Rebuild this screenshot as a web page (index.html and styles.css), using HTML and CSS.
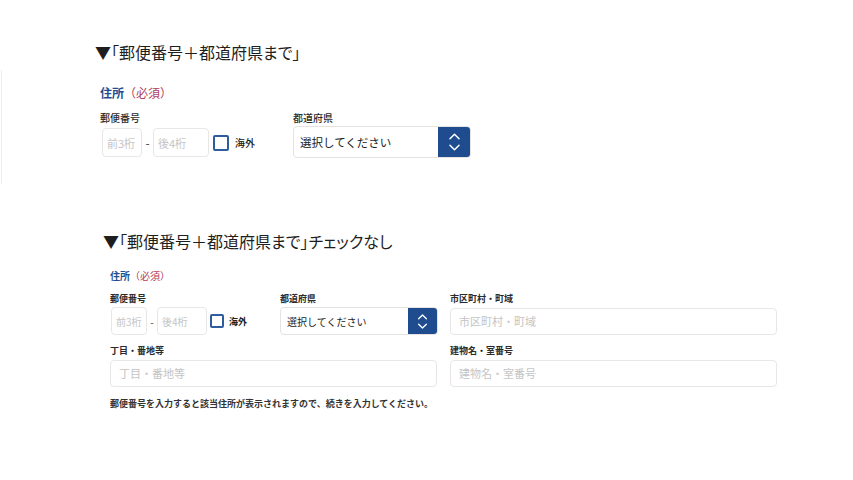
FILE: index.html
```html
<!DOCTYPE html>
<html lang="ja">

<head>
    <meta charset="utf-8">
    <title>住所入力フォーム</title>
    <link rel="stylesheet" href="styles.css">
</head>

<body>
    <div class="demo demo-one">
        <h2 class="demo-title">▼「郵便番号＋都道府県まで」</h2>
        <div class="panel">
            <div class="group-title">住所<span class="req">（必須）</span></div>
            <div class="row">
                <div class="field postal">
                    <label>郵便番号</label>
                    <div class="postal-inputs">
                        <input type="text" class="zip zip-a" placeholder="前3桁">
                        <span class="dash">-</span>
                        <input type="text" class="zip zip-b" placeholder="後4桁">
                        <span class="check"></span>
                        <span class="check-label">海外</span>
                    </div>
                </div>
                <div class="field pref">
                    <label>都道府県</label>
                    <div class="select">
                        <span class="select-text">選択してください</span>
                        <span class="select-btn">
                            <svg viewBox="0 0 14 22" width="13" height="20">
                                <path d="M2 7.5 L7 2.5 L12 7.5 M2 14.5 L7 19.5 L12 14.5" fill="none" stroke="#fff" stroke-width="1.6" stroke-linecap="round" stroke-linejoin="round"/>
                            </svg>
                        </span>
                    </div>
                </div>
            </div>
        </div>
    </div>

    <div class="demo demo-two">
        <h2 class="demo-title">▼「郵便番号＋都道府県まで」チェックなし</h2>
        <div class="panel">
            <div class="group-title">住所<span class="req">（必須）</span></div>
            <div class="grid">
                <div class="row">
                    <div class="field postal">
                        <label>郵便番号</label>
                        <div class="postal-inputs">
                            <input type="text" class="zip zip-a" placeholder="前3桁">
                            <span class="dash">-</span>
                            <input type="text" class="zip zip-b" placeholder="後4桁">
                            <span class="check"></span>
                            <span class="check-label">海外</span>
                        </div>
                    </div>
                    <div class="field pref">
                        <label>都道府県</label>
                        <div class="select">
                            <span class="select-text">選択してください</span>
                            <span class="select-btn">
                                <svg viewBox="0 0 14 22" width="11" height="17">
                                    <path d="M2 7.5 L7 2.5 L12 7.5 M2 14.5 L7 19.5 L12 14.5" fill="none" stroke="#fff" stroke-width="1.7" stroke-linecap="round" stroke-linejoin="round"/>
                                </svg>
                            </span>
                        </div>
                    </div>
                </div>
                <div class="field">
                    <label>市区町村・町域</label>
                    <input type="text" class="wide" placeholder="市区町村・町域">
                </div>
                <div class="field">
                    <label>丁目・番地等</label>
                    <input type="text" class="wide" placeholder="丁目・番地等">
                </div>
                <div class="field">
                    <label>建物名・室番号</label>
                    <input type="text" class="wide" placeholder="建物名・室番号">
                </div>
            </div>
            <p class="note">郵便番号を入力すると該当住所が表示されますので、続きを入力してください。</p>
        </div>
    </div>
</body>

</html>
```

FILE: styles.css
```css
body {
    margin: 0;
    background: #fff;
    color: #222;
    font-family: "Noto Sans CJK JP", "Noto Sans", sans-serif;
}

.demo-title {
    margin: 0;
    font-size: 16px;
    font-weight: 400;
    line-height: 20px;
    color: #1e1e1e;
    font-feature-settings: "palt";
}

input {
    font-family: inherit;
    box-sizing: border-box;
    border: 1px solid #ebe6e6;
    border-radius: 4px;
    background: #fff;
    outline: none;
    margin: 0;
}

input::placeholder {
    color: #c4c4c4;
}

label {
    display: block;
    font-weight: 700;
    color: #2a2a2a;
}

.group-title {
    font-weight: 700;
    color: #1f4f8f;
}

.req {
    font-weight: 400;
    color: #b04060;
}

.row {
    display: flex;
    align-items: flex-start;
}

.postal {
    flex-shrink: 0;
}

.postal-inputs {
    display: flex;
    align-items: center;
}

.dash {
    color: #444;
    text-align: center;
}

.check {
    box-sizing: border-box;
    border: 2px solid #2f5c9c;
    border-radius: 2px;
    background: #fff;
}

.check-label {
    white-space: nowrap;
}

.select {
    box-sizing: border-box;
    display: flex;
    align-items: center;
    border: 1px solid #e6e2e2;
    border-radius: 4px;
    overflow: hidden;
}

.select-text {
    flex: 1;
    color: #222;
}

.select-btn {
    align-self: stretch;
    display: flex;
    align-items: center;
    justify-content: center;
    background: #1f4c8f;
}

/* 上のサンプル */
.demo-one {
    padding-top: 42px;
}

.demo-one .demo-title {
    padding-left: 95px;
}

.demo-one .panel {
    margin: 8px 0 0 1px;
    border-left: 1px solid #eeeeee;
    padding: 15px 0 26px 98px;
}

.demo-one .group-title {
    font-size: 12px;
    line-height: 16px;
}

.demo-one label {
    font-size: 10px;
    line-height: 14px;
    margin-top: 10px;
    font-weight: 500;
}

.demo-one .postal {
    width: 193px;
}

.demo-one .postal-inputs {
    margin-top: 3px;
    padding-left: 2px;
}

.demo-one .zip {
    height: 29px;
    font-size: 11px;
    padding: 0 4px;
}

.demo-one .zip-a {
    width: 40px;
}

.demo-one .zip-b {
    width: 56px;
}

.demo-one .dash {
    width: 11px;
    font-size: 12px;
}

.demo-one .check {
    width: 16px;
    height: 16px;
    margin-left: 4px;
}

.demo-one .check-label {
    font-size: 10px;
    margin-left: 6px;
    font-weight: 500;
}

.demo-one .select {
    width: 178px;
    height: 32px;
    margin-top: 1px;
}

.demo-one .select-text {
    font-size: 11.5px;
    padding-left: 6px;
}

.demo-one .select-btn {
    width: 32px;
}

/* 下のサンプル */
.demo-two {
    padding-top: 47px;
}

.demo-two .demo-title {
    padding-left: 103px;
}

.demo-two .panel {
    padding: 18px 0 0 110px;
}

.demo-two .group-title {
    font-size: 10px;
    line-height: 14px;
}

.demo-two .grid {
    display: grid;
    grid-template-columns: 327px 327px;
    column-gap: 13px;
    row-gap: 10px;
}

.demo-two label {
    font-size: 9px;
    line-height: 12px;
    margin-bottom: 2px;
}

.demo-two .grid > .row,
.demo-two .grid > .field:nth-child(2) {
    margin-top: 10px;
}

.demo-two .postal {
    width: 170px;
}

.demo-two .zip {
    height: 28px;
    font-size: 10px;
    padding: 0 4px;
}

.demo-two .zip-a {
    width: 36px;
    margin-left: 1px;
}

.demo-two .zip-b {
    width: 50px;
}

.demo-two .dash {
    width: 10px;
    font-size: 10px;
}

.demo-two .check {
    width: 14px;
    height: 14px;
    margin-left: 3px;
}

.demo-two .check-label {
    font-size: 9px;
    margin-left: 5px;
    font-weight: 700;
}

.demo-two .select {
    width: 158px;
    height: 28px;
}

.demo-two .select-text {
    font-size: 10px;
    padding-left: 6px;
}

.demo-two .select-btn {
    width: 29px;
}

.demo-two .wide {
    width: 100%;
    height: 27px;
    font-size: 11px;
    padding: 0 8px;
}

.demo-two .note {
    margin: 10px 0 0;
    font-size: 9px;
    line-height: 13px;
    font-weight: 700;
    color: #333;
}
```
